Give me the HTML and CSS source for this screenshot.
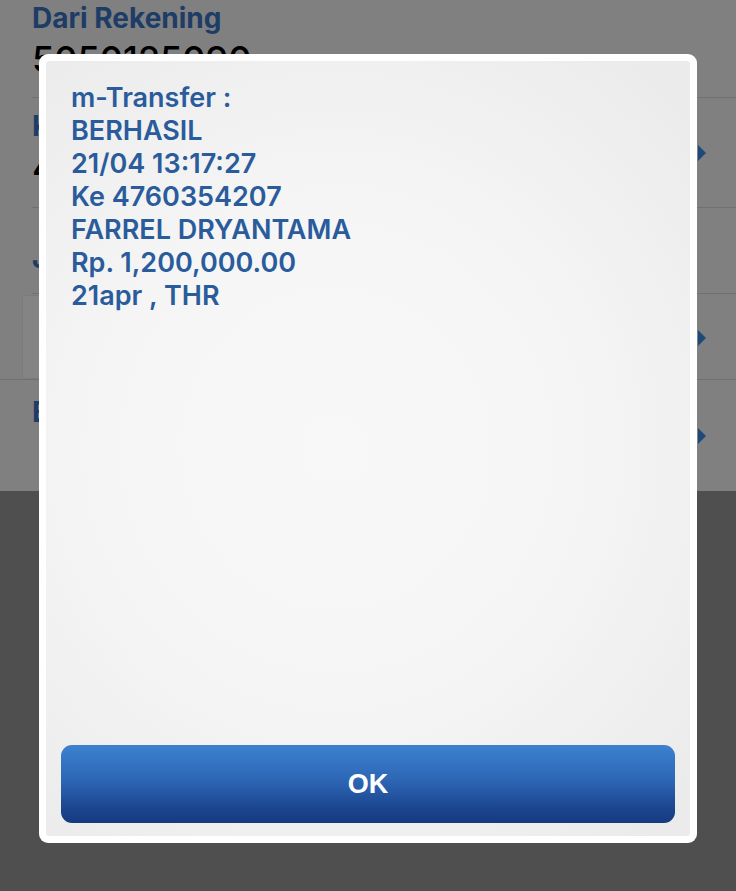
FILE: index.html
```html
<!DOCTYPE html>
<html>
<head>
<meta charset="utf-8">
<link rel="stylesheet" href="styles.css">
</head>
<body>
<div class="screen">
  <div class="form">
    <div class="row row-from">
      <div class="label">Dari Rekening</div>
      <div class="value">5050125090</div>
    </div>
    <div class="row row-to">
      <div class="label">Ke Rekening</div>
      <div class="value">4760354207</div>
      <span class="chev"></span>
    </div>
    <div class="row row-amount">
      <div class="label">Jumlah</div>
    </div>
    <div class="row row-input">
      <div class="inputbox"></div>
      <span class="chev"></span>
    </div>
    <div class="row row-note">
      <div class="label">Berita</div>
      <span class="chev"></span>
    </div>
  </div>
  <div class="lower"></div>

  <div class="dialog">
    <div class="dialog-inner">
      <div class="msg">
        <div>m-Transfer :</div>
        <div>BERHASIL</div>
        <div>21/04 13:17:27</div>
        <div>Ke 4760354207</div>
        <div>FARREL DRYANTAMA</div>
        <div>Rp. 1,200,000.00</div>
        <div>21apr , THR</div>
      </div>
      <button class="ok">OK</button>
    </div>
  </div>
</div>
</body>
</html>
```
FILE: styles.css
```css
* { box-sizing: border-box; }
html, body { margin: 0; padding: 0; }
body {
  width: 736px;
  height: 891px;
  overflow: hidden;
  font-family: Inter, "Liberation Sans", sans-serif;
  background: #4f4f4f;
}
.screen {
  position: relative;
  width: 736px;
  height: 891px;
  display: flex;
  flex-direction: column;
}
.form {
  height: 491px;
  background: #808080;
  display: flex;
  flex-direction: column;
}
.lower {
  flex: 1;
  background: #4f4f4f;
}
.row {
  position: relative;
  margin-left: 32px;
  border-bottom: 1px solid #707070;
  display: flex;
  flex-direction: column;
}
.row-from { height: 98px; padding-top: 1px; }
.row-to { height: 110px; padding-top: 11px; }
.row-amount { height: 86px; padding-top: 33px; }
.row-input { height: 86px; margin-left: 0; padding-left: 22px; }
.row-note { height: 111px; border-bottom: none; padding-top: 15px; }
.label {
  font-weight: 700;
  font-size: 28px;
  line-height: 34px;
  color: #1d3c66;
}
.value {
  font-size: 36px;
  font-weight: 500;
  line-height: 44px;
  color: #000;
  margin-top: 2px;
}
.inputbox {
  width: 30px;
  height: 84px;
  margin-top: 1px;
  background: #848484;
  border: 1px solid #7b7b7b;
  border-radius: 3px;
}
.chev {
  position: absolute;
  right: 30px;
  width: 0; height: 0;
  border-top: 8px solid transparent;
  border-bottom: 8px solid transparent;
  border-left: 8px solid #1d4a78;
}
.row-to .chev { top: 47px; }
.row-input .chev { top: 36px; }
.row-note .chev { top: 48px; }

.dialog {
  position: absolute;
  left: 39px;
  top: 54px;
  width: 658px;
  height: 789px;
  background: #ffffff;
  border-radius: 9px;
  padding: 7px;
}
.dialog-inner {
  width: 100%;
  height: 100%;
  border-radius: 3px;
  background:
    radial-gradient(ellipse 75% 65% at 45% 50%, #f8f8f8 0%, #f5f5f5 50%, #ebebeb 100%);
  display: flex;
  flex-direction: column;
  padding: 20px 15px 13px 15px;
}
.msg {
  flex: 1;
  padding-left: 10px;
  color: #2a5c9c;
  font-size: 27px;
  font-weight: 600;
  line-height: 33px;
}
.ok {
  height: 78px;
  width: 100%;
  border: none;
  border-radius: 11px;
  background: linear-gradient(to bottom, #3c81cf 0%, #2d66b5 45%, #1c4690 80%, #163a80 100%);
  color: #fff;
  font-family: "Liberation Sans", Arial, sans-serif;
  font-weight: 700;
  font-size: 27px;
  padding: 0;
}
```
